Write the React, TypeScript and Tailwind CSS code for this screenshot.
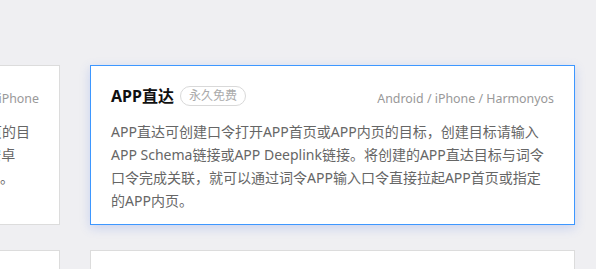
import React from 'react';

type CardProps = {
  title: string;
  badge: string;
  platforms: string;
  lines: string[];
  active?: boolean;
};

function FeatureCard({ title, badge, platforms, lines, active }: CardProps) {
  return (
    <div
      className={
        'w-[485px] h-[160px] shrink-0 bg-white px-5 pt-5 border ' +
        (active
          ? 'border-[#3d97ff] shadow-[0_3px_10px_rgba(70,110,230,0.22)]'
          : 'border-[#dcdcdc]')
      }
    >
      {/* Header */}
      <div className="flex items-center justify-between h-5">
        <div className="flex items-center gap-[6px]">
          <h3 className="text-[16px] font-bold text-[#111] leading-5">{title}</h3>
          <span className="h-5 px-[8px] rounded-full border border-[#d9d9d9] text-[12px] leading-[18px] text-[#aaa]">
            {badge}
          </span>
        </div>
        <span className="text-[12.4px] text-[#999] pt-[6px] whitespace-nowrap">{platforms}</span>
      </div>

      {/* Description */}
      <div className="mt-[14px] text-[14px] leading-[23px] text-[#666] whitespace-nowrap">
        {lines.map((line, i) => (
          <div key={i}>{line}</div>
        ))}
      </div>
    </div>
  );
}

function EmptyCard() {
  return <div className="w-[485px] h-[160px] shrink-0 bg-white border border-[#dcdcdc]" />;
}

export default function App() {
  return (
    <div className="h-[269px] overflow-hidden bg-[#efeff2] pt-[65px] font-['Noto_Sans','Noto_Sans_CJK_SC',sans-serif]">
      <div className="flex flex-col gap-[25px] ml-[-425px]">
        <div className="flex gap-[30px]">
          <FeatureCard
            title="小程序直达"
            badge="永久免费"
            platforms="Android / iPhone"
            lines={[
              '微信小程序直达可创建口令，可打开微信小程序首页或小程序内页的目',
              '标，创建目标请输入小程序AppID及页面路径，支持苹果手机与安卓',
              '系统，将创建的小程序直达目标与口令完成关联，即可用APP打开。',
            ]}
          />
          <FeatureCard
            active
            title="APP直达"
            badge="永久免费"
            platforms="Android / iPhone / Harmonyos"
            lines={[
              'APP直达可创建口令打开APP首页或APP内页的目标，创建目标请输入',
              'APP Schema链接或APP Deeplink链接。将创建的APP直达目标与词令',
              '口令完成关联，就可以通过词令APP输入口令直接拉起APP首页或指定',
              '的APP内页。',
            ]}
          />
        </div>
        <div className="flex gap-[30px]">
          <EmptyCard />
          <EmptyCard />
        </div>
      </div>
    </div>
  );
}
